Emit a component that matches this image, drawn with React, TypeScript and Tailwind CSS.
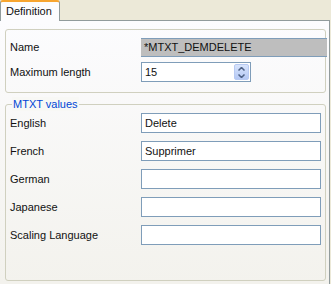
type IFieldProps = {
  label: string;
  value?: string;
};

const ValueRow = (props: IFieldProps) => (
  <div className="flex items-center h-[20px]">
    <span className="w-[135px] pl-[4px] flex-shrink-0">{props.label}</span>
    <div className="w-[180px] h-[20px] border border-[#7F9DB9] bg-white pl-[3px] flex items-center">
      {props.value}
    </div>
  </div>
);

const SpinArrow = (props: { up?: boolean }) => (
  <svg width="7" height="4" viewBox="0 0 7 4" className="block">
    <path
      d={props.up ? 'M0.5 3.5 L3.5 0.5 L6.5 3.5' : 'M0.5 0.5 L3.5 3.5 L6.5 0.5'}
      fill="none"
      stroke="#4D6185"
      strokeWidth="1.5"
    />
  </svg>
);

export default function App() {
  return (
    <div
      className="w-[331px] h-[284px] bg-[#ECE9D8] flex flex-col overflow-hidden text-[11px] text-[#111]"
      style={{ fontFamily: '"Liberation Sans", Arial, sans-serif' }}
    >
      {/* tab strip */}
      <div className="flex h-[21px] flex-shrink-0">
        <div className="relative w-[60px] h-[21px] bg-[#FCFCFE] border-t-2 border-t-[#F7A530] border-l border-r border-[#919B9C] rounded-t-[3px] flex items-center pl-[5px] -mb-px z-10">
          Definition
        </div>
        <div className="flex-1 border-b border-[#919B9C] mr-[1px]" />
      </div>

      {/* tab body */}
      <div className="flex-1 border-r border-[#919B9C] mr-[1px] bg-gradient-to-b from-[#FCFCFE] to-[#F3F2ED] pt-[8px] pl-[5px] pr-[3px]">
        <div className="border border-[#D0D0BF] rounded-[3px] h-[64px] pt-[8px] flex flex-col gap-[5px]">
          <div className="flex items-center h-[19px]">
            <span className="w-[135px] pl-[4px] flex-shrink-0">Name</span>
            <div className="w-[186px] flex-shrink-0 h-[19px] bg-[#BEBEBE] border-y border-[#7F9DB9] pl-[3px] flex items-center z-10">
              *MTXT_DEMDELETE
            </div>
          </div>
          <div className="flex items-center h-[20px]">
            <span className="w-[135px] pl-[4px] flex-shrink-0">Maximum length</span>
            <div className="w-[110px] h-[20px] border border-[#7F9DB9] bg-white flex items-center justify-between pl-[3px] pr-[1px]">
              <span>15</span>
              <div className="w-[15px] h-[16px] rounded-[2px] bg-gradient-to-b from-[#D8E4FC] to-[#B4C8F4] border border-[#B8CAF2] flex flex-col items-center justify-center gap-[3px]">
                <SpinArrow up />
                <SpinArrow />
              </div>
            </div>
          </div>
        </div>

        <div className="relative mt-[11px] border border-[#D0D0BF] rounded-[3px] h-[177px] pt-[8px] flex flex-col gap-[8px]">
          <span className="absolute -top-[8px] left-[6px] px-[1px] bg-[#F8F8F5] text-[#0046D5] leading-[14px]">
            MTXT values
          </span>
          <ValueRow label="English" value="Delete" />
          <ValueRow label="French" value="Supprimer" />
          <ValueRow label="German" />
          <ValueRow label="Japanese" />
          <ValueRow label="Scaling Language" />
        </div>
      </div>
    </div>
  );
}
